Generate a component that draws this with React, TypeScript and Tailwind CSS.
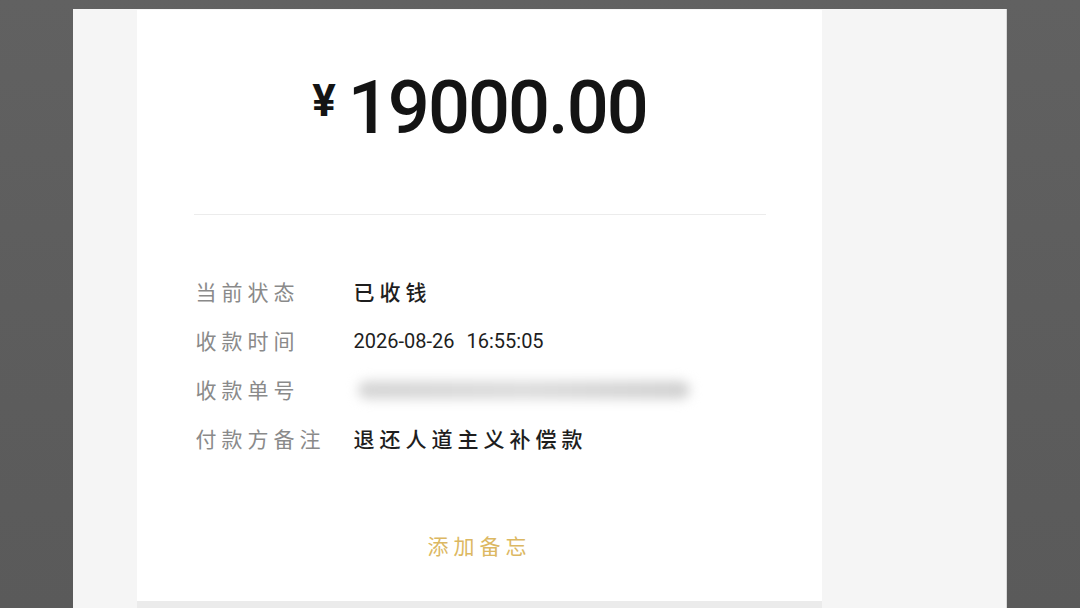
const rows = [
  { label: '当前状态', value: '已收钱', kind: 'text' },
  { label: '收款时间', value: '', kind: 'date' },
  { label: '收款单号', value: '', kind: 'blur' },
  { label: '付款方备注', value: '退还人道主义补偿款', kind: 'text' },
];

const cjk = "font-['Noto_Sans_CJK_SC','Noto_Sans',sans-serif]";

export default function App() {
  return (
    <div className="w-[1080px] h-[608px] overflow-hidden bg-gradient-to-b from-[#616161] via-[#5d5d5d] to-[#5a5a5a] pt-[9px] pl-[73px]">
      <div className="w-[934px] h-[599px] bg-[#f5f5f5] border-r border-[#d8d8d8] pl-[64px] pt-px">
        <div className="w-[685px] h-[598px] flex flex-col bg-[#ebebeb]">
          <div className="h-[591px] bg-white flex flex-col items-center">
            {/* amount */}
            <div className="mt-[61px] flex items-start font-['Roboto','Noto_Sans',sans-serif] text-[#141414]">
              <span className="text-[44px] leading-none font-bold mt-[8px] mr-[12px]">¥</span>
              <span className="text-[74px] leading-none tracking-[-2px] font-medium">19000.00</span>
            </div>

            <div className="mt-[69px] w-[572px] h-px bg-[#ececec]" />

            <div className={`mt-[52px] w-[572px] flex flex-col ${cjk}`}>
              {rows.map((r) => (
                <div key={r.label} className="h-[49px] flex items-center">
                  <div className="w-[160px] pl-[2px] text-[21px] tracking-[5px] text-[#8a8a8a]">{r.label}</div>
                  {r.kind === 'text' && (
                    <div className="text-[21px] tracking-[5px] font-medium text-[#1e1e1e]">{r.value}</div>
                  )}
                  {r.kind === 'date' && (
                    <div className="text-[20px] text-[#1e1e1e] font-['Roboto',sans-serif]">
                      <span>2026-08-26</span>
                      <span className="ml-[12px]">16:55:05</span>
                    </div>
                  )}
                  {r.kind === 'blur' && (
                    <div className="w-[332px] h-[18px] ml-[4px] rounded-full bg-gradient-to-r from-[#d4d4d4] via-[#dcdcdc] to-[#d0d0d0] blur-[6px]" />
                  )}
                </div>
              ))}
            </div>

            <div className={`mt-[68px] text-[21px] leading-[28px] tracking-[5px] text-[#dcb862] ${cjk}`}>添加备忘</div>
          </div>
        </div>
      </div>
    </div>
  );
}
